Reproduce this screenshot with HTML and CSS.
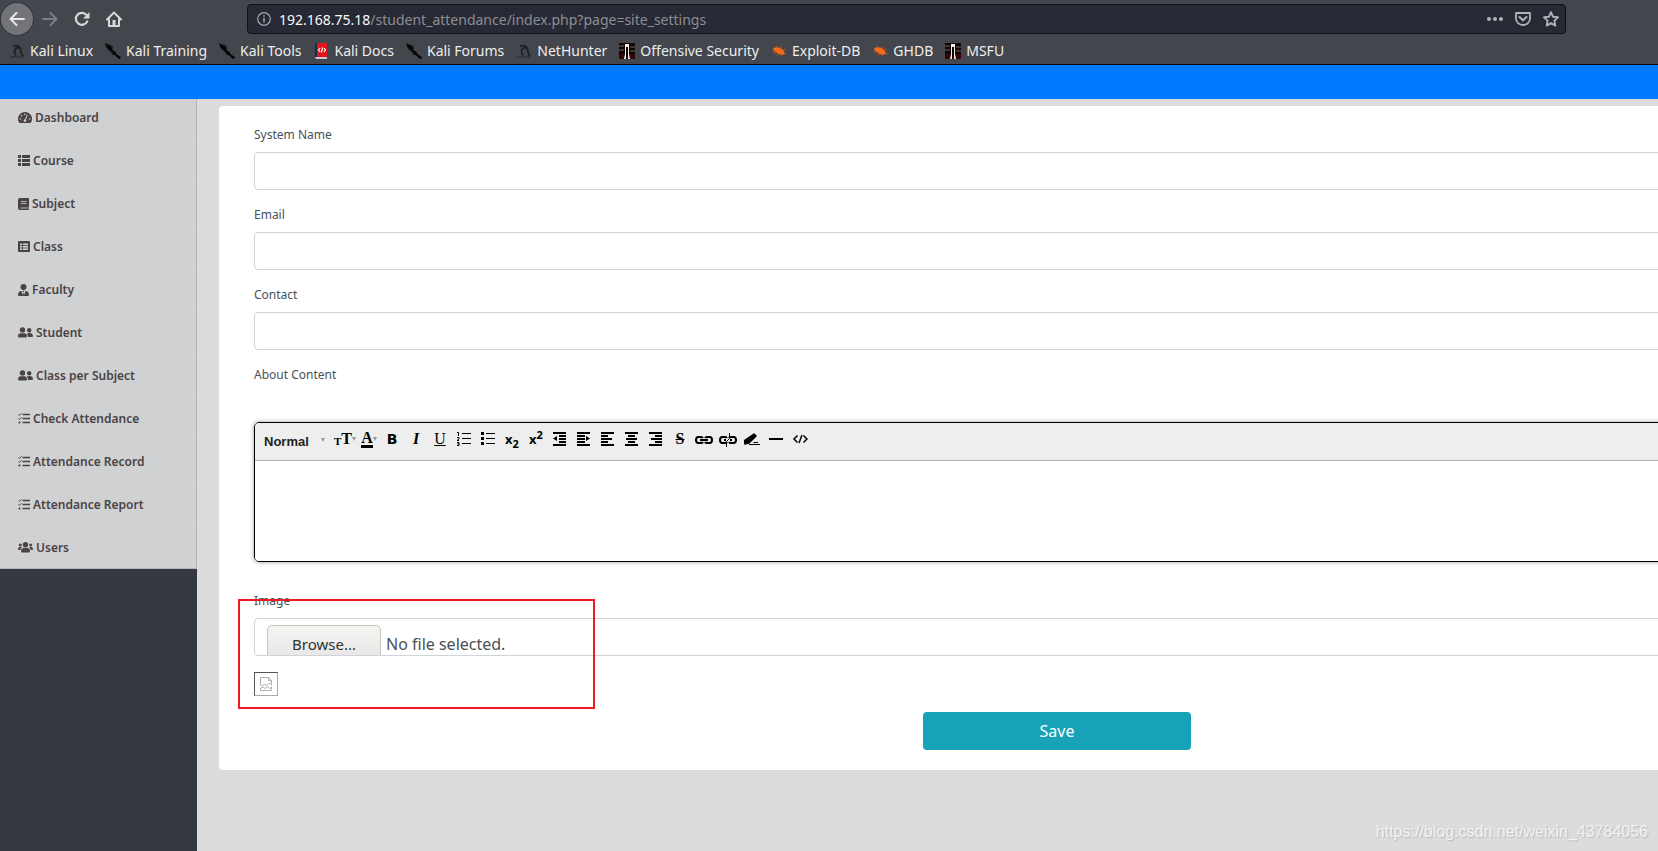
FILE: index.html
```html
<!DOCTYPE html>
<html lang="en">
<head>
    <meta charset="UTF-8">
    <meta name="viewport" content="width=device-width, initial-scale=1.0">
    <title>Site Settings</title>
    <link rel="stylesheet" href="styles.css">
</head>
<body>
    <!-- shared icons -->
    <svg class="sprite" aria-hidden="true">
        <symbol id="i-dragon" viewBox="0 0 16 16">
            <path d="M4 3.500C7 2 10.500 2.500 11.500 6c.8 3-.5 5 3 7.500M11 5c-3-1-5.500.5-5.500 3s1 3.500 1.500 4.500" fill="none" stroke="#1d1f22" stroke-width="1.800"/>
            <path d="M1 14.500c3-1 8-1.500 13 .5" fill="none" stroke="#2b2d31" stroke-width="1.200"/>
        </symbol>
        <symbol id="i-knife" viewBox="0 0 16 16">
            <path d="M0 0l3 1.500 2 .5 2 2.500 1 3 2 1 2 3 4 2.500-1 2-2-.5-2.500-3-3-1-2-3-3-2L1 3z" fill="#050505"/>
            <path d="M4 2l3 .5 1 3M1 4l3 3 4 3" fill="none" stroke="#222" stroke-width="1"/>
        </symbol>
        <symbol id="i-docs" viewBox="0 0 16 16">
            <path d="M2 0h2v14H2z" fill="#1b2b4c"/>
            <path d="M4 0h10v14H4z" fill="#e0151b"/>
            <path d="M2 14h12v2H3z" fill="#c9c9c9"/>
            <path d="M7 5L5.500 7 7 9M11 5l1.500 2L11 9M9.500 4.500l-1 5" fill="none" stroke="#fff" stroke-width="1.200"/>
        </symbol>
        <symbol id="i-offsec" viewBox="0 0 16 16">
            <path d="M0 0h16v16H0z" fill="#120506"/>
            <path d="M0 3h5M11 4h5M0 7h5M11 8h5" stroke="#6d6262" stroke-width="1"/>
            <path d="M0 11h5v5H0zM11 11h5v5h-5z" fill="#3a0507"/>
            <path d="M6 1h4v10l1 5H9V4H7v12H5l1-5z" fill="#f2efe9"/>
        </symbol>
        <symbol id="i-bug" viewBox="0 0 16 16">
            <path d="M2 5l4-1 4 1 3 3 1 3-3 1-4-1-4-3z" fill="#f26a1b"/>
            <path d="M5 2l2 3M10 3v3M1 8l4 1M12 7l3-1M13 10l3 1M6 13l2-3M10 14v-3M3 11l3-2" stroke="#a5502a" stroke-width="1"/>
        </symbol>
        <symbol id="i-dash" viewBox="0 0 14 12">
            <path d="M7 0a7 7 0 0 0-6 10.600c.2.300.5.400.8.400h10.400c.3 0 .6-.1.800-.4A7 7 0 0 0 7 0z" fill="#4a4344"/>
            <path d="M9.300 2.800L7.500 7.500" stroke="#cfd1d3" stroke-width="1"/>
            <g fill="#cfd1d3"><circle cx="7" cy="8.600" r="1.300"/><circle cx="2.300" cy="7" r=".8"/><circle cx="3.600" cy="3.700" r=".8"/><circle cx="6.800" cy="2.200" r=".8"/><circle cx="11.700" cy="7" r=".8"/></g>
        </symbol>
        <symbol id="i-thlist" viewBox="0 0 12 12">
            <path d="M0 0h3v3H0zM4 0h8v3H4zM0 4h3v3H0zM4 4h8v3H4zM0 8h3v3H0zM4 8h8v3H4z" fill="#4a4344"/>
        </symbol>
        <symbol id="i-book" viewBox="0 0 11 12">
            <path d="M2 0h8.500q.5 0 .5.500v8l-.5.800v1.700q.5 0 .5.500t-.5.500H2Q0 12 0 10V2Q0 0 2 0z" fill="#4a4344"/>
            <path d="M3 3.500h5.500M3 5.500h5.500M2.500 10h7" stroke="#cfd1d3" stroke-width=".8"/>
        </symbol>
        <symbol id="i-table" viewBox="0 0 12 12">
            <rect width="12" height="11" rx="1" fill="#4a4344"/>
            <path d="M2 2.500h8v6.500H2z" fill="#cfd1d3"/>
            <path d="M2 4.500h8M2 7h8M4.500 2v7" stroke="#4a4344" stroke-width=".8"/>
        </symbol>
        <symbol id="i-tie" viewBox="0 0 11 12">
            <circle cx="5.500" cy="3" r="3" fill="#4a4344"/>
            <path d="M3.300 7L5 11l.5-3L6 11l1.700-4C9.600 7.200 11 8.500 11 10.500q0 1.500-1 1.500H1q-1 0-1-1.500C0 8.500 1.400 7.200 3.300 7z" fill="#4a4344"/>
            <path d="M4.500 6.800h2L6 8h-1z" fill="#4a4344"/>
        </symbol>
        <symbol id="i-friends" viewBox="0 0 15 12">
            <g fill="#4a4344"><circle cx="4.500" cy="2.900" r="2.700"/><circle cx="11.200" cy="3.300" r="2.200"/>
            <path d="M2.800 6.200h3.400Q9 6.400 9 9.100q0 1.400-1 1.400H1q-1 0-1-1.400 0-2.700 2.800-2.900zM9 6.700c.4-.4 1-.6 1.500-.6h2Q15 6.400 15 9q0 1-.8 1H9.900c0-1.500-.3-2.400-.9-3.300z"/></g>
        </symbol>
        <symbol id="i-tasks" viewBox="0 0 12 12">
            <path d="M4.500 1.500H12M4.500 5.500H12M4.500 9.500H12" stroke="#4a4344" stroke-width="1.500"/>
            <path d="M.3 1.500l1 1L3.500.3M.3 5.500l1 1 2.200-2.200" fill="none" stroke="#4a4344"/>
            <circle cx="1.500" cy="9.500" r="1.100" fill="#4a4344"/>
        </symbol>
        <symbol id="i-users" viewBox="0 0 15 12">
            <g fill="#4a4344"><circle cx="7.500" cy="2.700" r="2.700"/><circle cx="2.300" cy="2.900" r="1.500"/><circle cx="12.700" cy="2.900" r="1.500"/>
            <path d="M5.800 6.100h3.400Q12 6.400 12 9.200q0 1.400-1 1.400H4q-1 0-1-1.400 0-2.800 2.800-3.100zM1.500 5h1.600l.9.400Q2.500 6.300 2.300 8H.7Q0 8 0 7.300 0 5.200 1.500 5zM13.500 5h-1.600l-.9.400q1.500.9 1.700 2.600h1.600q.7 0 .7-.7 0-2.100-1.500-2.300z"/></g>
        </symbol>
    </svg>

    <header class="browser">
        <div class="nav-row">
            <button type="button" class="nav-btn back" aria-label="Back">
                <svg width="16" height="16" viewBox="0 0 16 16"><path d="M15 8H2M7.500 2L1.500 8l6 6" fill="none" stroke="#e6e6e6" stroke-width="2" stroke-linecap="round" stroke-linejoin="round"/></svg>
            </button>
            <button type="button" class="nav-btn" aria-label="Forward">
                <svg width="16" height="16" viewBox="0 0 16 16"><path d="M1 8h13M8.500 2l6 6-6 6" fill="none" stroke="#7d7f83" stroke-width="2" stroke-linecap="round" stroke-linejoin="round"/></svg>
            </button>
            <button type="button" class="nav-btn" aria-label="Reload">
                <svg width="16" height="16" viewBox="0 0 16 16"><path d="M13.200 10.500A6 6 0 1 1 12.500 4" fill="none" stroke="#d7d7d3" stroke-width="2.200" stroke-linecap="round"/><path d="M15.500 1v6.500H9z" fill="#d7d7d3"/></svg>
            </button>
            <button type="button" class="nav-btn" aria-label="Home">
                <svg width="16" height="16" viewBox="0 0 16 16"><path d="M1 8.500L8 1.500l7 7M3 8v7h10V8" fill="none" stroke="#d7d7d3" stroke-width="2" stroke-linecap="round" stroke-linejoin="round"/><path d="M6.500 9h3v6h-3z" fill="#d7d7d3"/></svg>
            </button>
            <div class="url-bar">
                <svg width="14" height="14" viewBox="0 0 14 14"><circle cx="7" cy="7" r="6.300" fill="none" stroke="#a9aaae" stroke-width="1.200"/><path d="M7 6v4.500M7 3.200v1.500" stroke="#a9aaae" stroke-width="1.500"/></svg>
                <span class="url"><b>192.168.75.18</b>/student_attendance/index.php?page=site_settings</span>
                <svg width="16" height="16" viewBox="0 0 16 16" fill="#b1b1b3"><circle cx="2" cy="8" r="2"/><circle cx="8" cy="8" r="2"/><circle cx="14" cy="8" r="2"/></svg>
                <svg width="16" height="16" viewBox="0 0 16 16" fill="none" stroke="#b1b1b3" stroke-width="1.800"><path d="M1 2h14v5.500a7 6.500 0 0 1-14 0z" stroke-linejoin="round"/><path d="M4.500 6L8 9.300 11.500 6" stroke-width="2" stroke-linecap="round"/></svg>
                <svg width="16" height="16" viewBox="0 0 16 16"><path d="M8 1.200l2 4.500 5 .6-3.600 3.300.9 5L8 12.200l-4.300 2.400.9-5L1 6.300l5-.6z" fill="none" stroke="#b1b1b3" stroke-width="1.900" stroke-linejoin="round"/></svg>
            </div>
        </div>
        <nav class="bookmarks">
            <a href="#"><svg><use href="#i-dragon"/></svg>Kali Linux</a>
            <a href="#"><svg><use href="#i-knife"/></svg>Kali Training</a>
            <a href="#"><svg><use href="#i-knife"/></svg>Kali Tools</a>
            <a href="#"><svg><use href="#i-docs"/></svg>Kali Docs</a>
            <a href="#"><svg><use href="#i-knife"/></svg>Kali Forums</a>
            <a href="#"><svg><use href="#i-dragon"/></svg>NetHunter</a>
            <a href="#"><svg><use href="#i-offsec"/></svg>Offensive Security</a>
            <a href="#"><svg><use href="#i-bug"/></svg>Exploit-DB</a>
            <a href="#"><svg><use href="#i-bug"/></svg>GHDB</a>
            <a href="#"><svg><use href="#i-offsec"/></svg>MSFU</a>
        </nav>
    </header>

    <div class="topbar"></div>

    <div class="layout">
        <nav class="sidebar">
            <div class="sidebar-list">
                <a href="#"><svg width="14" height="12"><use href="#i-dash"/></svg>Dashboard</a>
                <a href="#"><svg width="12" height="12"><use href="#i-thlist"/></svg>Course</a>
                <a href="#"><svg width="11" height="12"><use href="#i-book"/></svg>Subject</a>
                <a href="#"><svg width="12" height="12"><use href="#i-table"/></svg>Class</a>
                <a href="#"><svg width="11" height="12"><use href="#i-tie"/></svg>Faculty</a>
                <a href="#"><svg width="15" height="12"><use href="#i-friends"/></svg>Student</a>
                <a href="#"><svg width="15" height="12"><use href="#i-friends"/></svg>Class per Subject</a>
                <a href="#"><svg width="12" height="12"><use href="#i-tasks"/></svg>Check Attendance</a>
                <a href="#"><svg width="12" height="12"><use href="#i-tasks"/></svg>Attendance Record</a>
                <a href="#"><svg width="12" height="12"><use href="#i-tasks"/></svg>Attendance Report</a>
                <a href="#"><svg width="15" height="12"><use href="#i-users"/></svg>Users</a>
            </div>
        </nav>

        <main class="content">
            <form class="card">
                <div class="form-group">
                    <label for="name">System Name</label>
                    <input type="text" class="form-control" id="name" name="name">
                </div>
                <div class="form-group">
                    <label for="email">Email</label>
                    <input type="email" class="form-control" id="email" name="email">
                </div>
                <div class="form-group">
                    <label for="contact">Contact</label>
                    <input type="text" class="form-control" id="contact" name="contact">
                </div>
                <div class="form-group about">
                    <label for="about">About Content</label>
                    <div class="editor">
                        <div class="editor-tools">
                            <div class="format">
                                <select aria-label="Format">
                                    <option>Normal</option>
                                </select>
                                <i class="caret"></i>
                            </div>
                            <button type="button" class="drop serif" aria-label="Font size"><span class="small-t">T</span><span>T</span><i class="caret"></i></button>
                            <button type="button" class="drop serif" aria-label="Color"><span class="color-a">A</span><i class="caret"></i></button>
                            <button type="button" class="bold">B</button>
                            <button type="button" class="serif italic">I</button>
                            <button type="button" class="serif underline">U</button>
                            <button type="button" aria-label="Ordered list"><svg viewBox="0 0 16 16"><path d="M6 2.500h9M6 7.500h9M6 12.500h9" stroke="#000"/><path d="M1 1.500h1.500V5M1 6.500h2v1.500L1 9.500h2M1 11.500h2v3H1M1.500 13H3" fill="none" stroke="#000"/></svg></button>
                            <button type="button" aria-label="Unordered list"><svg viewBox="0 0 16 16"><path d="M6 2.500h9M6 7.500h9M6 12.500h9" stroke="#000"/><path d="M1 1h3v3H1zM1 6h3v3H1zM1 11h3v3H1z"/></svg></button>
                            <button type="button" class="script" aria-label="Subscript">x<sub>2</sub></button>
                            <button type="button" class="script" aria-label="Superscript">x<sup>2</sup></button>
                            <button type="button" aria-label="Outdent"><svg viewBox="0 0 16 16"><path d="M1 1h13v2H1zM7 4h7v2H7zM7 7h7v2H7zM7 10h7v2H7zM1 13h13v2H1zM5 5v5L1 7.500z"/></svg></button>
                            <button type="button" aria-label="Indent"><svg viewBox="0 0 16 16"><path d="M1 1h13v2H1zM1 4h8v2H1zM1 7h8v2H1zM1 10h8v2H1zM1 13h13v2H1zM10 5v5l4-2.500z"/></svg></button>
                            <button type="button" aria-label="Align left"><svg viewBox="0 0 16 16"><path d="M1 1h13v2H1zM1 4h7v2H1zM1 7h11v2H1zM1 10h7v2H1zM1 13h13v2H1z"/></svg></button>
                            <button type="button" aria-label="Align center"><svg viewBox="0 0 16 16"><path d="M1 1h13v2H1zM4 4h7v2H4zM2 7h11v2H2zM4 10h7v2H4zM1 13h13v2H1z"/></svg></button>
                            <button type="button" aria-label="Align right"><svg viewBox="0 0 16 16"><path d="M1 1h13v2H1zM7 4h7v2H7zM3 7h11v2H3zM7 10h7v2H7zM1 13h13v2H1z"/></svg></button>
                            <button type="button" class="serif strike">S</button>
                            <button type="button" aria-label="Link"><svg class="wide" viewBox="0 0 18 16"><path d="M8 7Q7.500 6 6 6H3.500Q1 6 1 9t2.500 3H6q1.500 0 2-1M10 7q.5-1 2-1h2.500Q17 6 17 9t-2.500 3H12q-1.500 0-2-1M5 9h8" fill="none" stroke="#000" stroke-width="2"/></svg></button>
                            <button type="button" aria-label="Unlink"><svg class="wide" viewBox="0 0 18 16"><path d="M8 7Q7.500 6 6 6H3.500Q1 6 1 9t2.500 3H6q1.500 0 2-1M10 7q.5-1 2-1h2.500Q17 6 17 9t-2.500 3H12q-1.500 0-2-1M5 9h2M11 9h2" fill="none" stroke="#000" stroke-width="2"/><path d="M10.500 2v5.500l-3 3V16" fill="none" stroke="#000"/></svg></button>
                            <button type="button" aria-label="Clear format"><svg viewBox="0 0 16 16"><path d="M10 3l2 2-7 7-4 1-1-3z" stroke="#000" stroke-width="1.500" stroke-linejoin="round"/><path d="M9.500 11.500H14M5 13.500h11" stroke="#000"/></svg></button>
                            <button type="button" aria-label="Line"><svg viewBox="0 0 16 16"><path d="M1 7h14v2H1z"/></svg></button>
                            <button type="button" aria-label="Source"><svg viewBox="0 0 16 16"><path d="M5.500 4.500L2 8l3.500 3.500M11.500 4.500L15 8l-3.500 3.500M10 4l-3 8" fill="none" stroke="#000" stroke-width="1.500"/></svg></button>
                        </div>
                        <textarea id="about" name="about"></textarea>
                    </div>
                </div>
                <div class="form-group image-group">
                    <label for="img">Image</label>
                    <div class="form-control file-control">
                        <input type="file" id="img" name="img">
                        <span class="browse">Browse...</span>
                        <span>No file selected.</span>
                    </div>
                    <div class="highlight"></div>
                </div>
                <div class="preview" role="img" aria-label="Image preview">
                    <svg width="14" height="16" viewBox="0 0 14 16" fill="none" stroke="#b0b0b0"><path d="M1.500 9V1.500h8l3 3V9l-2-2-3 2.500-2-1.500-2 2zM9.500 1.500v3h3M1.500 14.500h11V11l-2 1.500-2-2-2.500 2-2-1.500-2.500 1z"/></svg>
                </div>
                <button type="submit" class="save">Save</button>
            </form>
        </main>
    </div>

    <div class="watermark">https://blog.csdn.net/weixin_43784056</div>
</body>
</html>
```

FILE: styles.css
```css
*,
*::before,
*::after {
    box-sizing: border-box;
}

body {
    margin: 0;
    min-height: 100vh;
    display: flex;
    flex-direction: column;
    overflow: hidden;
    font-family: "Noto Sans", sans-serif;
    font-size: 12px;
    line-height: 18px;
    color: #495057;
    background: #dcdcdc;
}

button {
    padding: 0;
    border: none;
    background: none;
    cursor: pointer;
}

.sprite {
    display: none;
}

/* browser bar */
.browser {
    background: #43464c;
    border-bottom: 1px solid #0c0c0d;
}

.nav-row {
    display: flex;
    align-items: center;
    height: 38px;
    padding: 0 92px 0 1px;
}

.nav-btn {
    width: 32px;
    height: 32px;
    display: flex;
    align-items: center;
    justify-content: center;
}

.nav-btn.back {
    margin-right: 1px;
    border-radius: 50%;
    background: #737479;
    box-shadow: 0 0 0 1px #35373b;
}

.url-bar {
    flex: 1;
    display: flex;
    align-items: center;
    gap: 12px;
    height: 30px;
    margin-left: 117px;
    padding: 0 6px 0 9px;
    background: #272935;
    border: 1px solid #0f1014;
    border-radius: 4px;
}

.url {
    flex: 1;
    margin-left: -4px;
    padding-top: 2px;
    font-size: 14px;
    line-height: 20px;
    color: #8d8e93;
}

.url b {
    font-weight: 400;
    color: #f9f9fa;
}

.bookmarks {
    display: flex;
    gap: 12px;
    height: 26px;
    padding-left: 9px;
}

.bookmarks a {
    display: flex;
    align-items: center;
    gap: 5px;
    font-size: 14px;
    color: #eeeeef;
    text-decoration: none;
    white-space: nowrap;
}

.bookmarks svg {
    width: 16px;
    height: 16px;
}

/* page */
.topbar {
    height: 34px;
    background: #007bff;
}

.layout {
    flex: 1;
    display: flex;
    overflow: hidden;
}

.sidebar {
    flex: none;
    width: 197px;
    background: #343840;
}

.sidebar-list {
    margin-top: -3px;
    border-right: 1px solid #b4b6ba;
    border-bottom: 1px solid #b4b6ba;
    background: #cfd1d3;
}

.sidebar-list a {
    display: flex;
    align-items: center;
    gap: 3px;
    height: 43px;
    padding: 2px 0 0 18px;
    border-bottom: 1px solid #d0d2d4;
    font-weight: 600;
    color: #4a4344;
    text-decoration: none;
}

.sidebar-list a:last-child {
    height: 42px;
}

.content {
    flex: 1;
    min-width: 0;
    padding: 7px 0 0 22px;
}

/* the form is wider than the window and runs off its right edge */
.card {
    display: flex;
    flex-direction: column;
    margin-right: -237px;
    padding: 20px 35px;
    background: #fff;
    border-radius: 4px;
}

.form-group {
    position: relative;
    margin-bottom: 16px;
}

.form-group label {
    display: block;
    margin-bottom: 8px;
}

.form-control {
    display: block;
    width: 100%;
    height: 38px;
    padding: 6px 12px;
    border: 1px solid #ced4da;
    border-radius: 4px;
    background: #fff;
    font-family: inherit;
    font-size: 16px;
    color: #495057;
}

.about {
    margin-bottom: 30px;
}

.about label {
    margin-bottom: 38px;
}

.editor {
    height: 140px;
    display: flex;
    flex-direction: column;
    border: 1px solid #000;
    border-radius: 5px;
    box-shadow: 0 0 4px #999;
    overflow: hidden;
}

.editor-tools {
    display: flex;
    height: 38px;
    padding-left: 9px;
    background: #eee;
    border-bottom: 1px solid #b4b4b4;
    color: #000;
}

.editor-tools button {
    display: flex;
    align-items: center;
    justify-content: center;
    width: 24px;
    height: 32px;
    font-size: 16px;
    line-height: 20px;
    color: #000;
}

.editor-tools svg {
    width: 16px;
    height: 16px;
}

.editor-tools svg.wide {
    width: 18px;
}

.format {
    display: flex;
    align-items: center;
    width: 68px;
    height: 34px;
}

.format select {
    width: 57px;
    height: 24px;
    padding: 2px 0 0;
    appearance: none;
    border: none;
    background: none;
    font: bold 13px "Liberation Sans", sans-serif;
    color: #222;
}

.caret {
    border: 2px solid transparent;
    border-top: 4px solid #999;
    border-bottom: none;
}

.editor-tools .serif {
    font-family: "Liberation Serif", serif;
    font-weight: 700;
}

.editor-tools .bold {
    font-family: "DejaVu Sans", sans-serif;
    font-size: 14px;
    font-weight: 700;
}

.editor-tools .italic {
    font-style: italic;
}

.editor-tools .underline {
    font-weight: 400;
    text-decoration: underline;
}

.editor-tools .strike {
    text-decoration: line-through;
}

.editor-tools .drop {
    padding-left: 2px;
}

.editor-tools .small-t {
    font-size: 11px;
    padding-top: 3px;
}

.color-a {
    line-height: 14px;
    border-bottom: 3px solid #000;
}

.editor-tools .script {
    font-family: "Noto Sans", sans-serif;
    font-size: 13px;
    font-weight: 700;
}

.script sub,
.script sup {
    font-size: 11px;
    line-height: 10px;
}

.script sub {
    padding-top: 10px;
}

.script sup {
    padding-bottom: 8px;
}

.editor textarea {
    flex: 1;
    padding: 10px;
    border: none;
    resize: none;
    font: inherit;
}

.file-control {
    display: flex;
    align-items: flex-start;
    gap: 5px;
    line-height: 26px;
    overflow: hidden;
}

.file-control input {
    position: absolute;
    width: 100%;
    opacity: 0;
}

.browse {
    flex: none;
    width: 114px;
    height: 38px;
    padding-top: 5px;
    border: 1px solid #c6c2bc;
    border-radius: 5px;
    background: linear-gradient(#f6f5f4, #e6e4e2);
    text-align: center;
    font-size: 15px;
    color: #2e3436;
}

.browse + span {
    padding-top: 6px;
}

.highlight {
    position: absolute;
    top: 7px;
    left: -16px;
    width: 357px;
    height: 110px;
    border: 2px solid #ed1c24;
    pointer-events: none;
}

.preview {
    display: flex;
    align-items: center;
    justify-content: center;
    width: 24px;
    height: 24px;
    margin-bottom: 16px;
    border: 1px solid #aaa;
    border-top-color: #555;
    border-left-color: #555;
}

.save {
    align-self: center;
    width: 268px;
    height: 38px;
    border-radius: 4px;
    background: #17a2b8;
    font-family: inherit;
    font-size: 16px;
    color: #fff;
}

.watermark {
    position: absolute;
    right: 10px;
    bottom: 10px;
    font: 16px "Liberation Sans", sans-serif;
    color: #f3f3f3;
    text-shadow: 1px 1px 1px #b8b8b8;
}
```
